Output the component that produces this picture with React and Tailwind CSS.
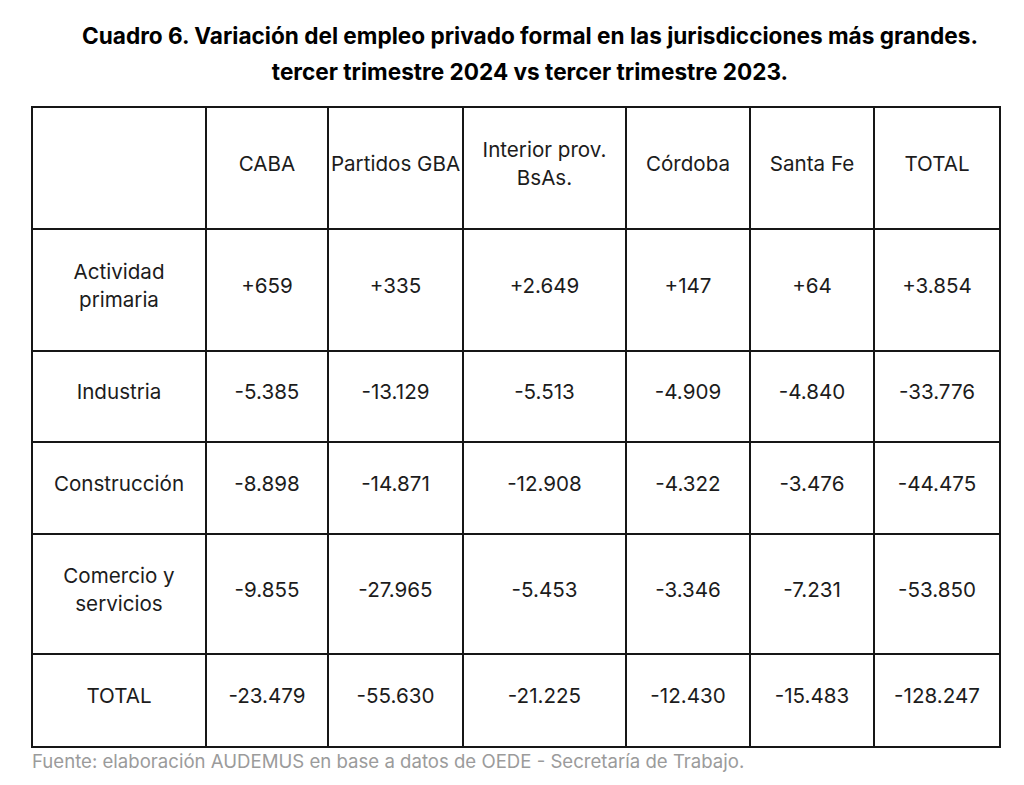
import React from "react";

const cols = ["", "CABA", "Partidos GBA", "Interior prov.\nBsAs.", "Córdoba", "Santa Fe", "TOTAL"];
const rows = [
  ["Actividad\nprimaria", "+659", "+335", "+2.649", "+147", "+64", "+3.854"],
  ["Industria", "-5.385", "-13.129", "-5.513", "-4.909", "-4.840", "-33.776"],
  ["Construcción", "-8.898", "-14.871", "-12.908", "-4.322", "-3.476", "-44.475"],
  ["Comercio y\nservicios", "-9.855", "-27.965", "-5.453", "-3.346", "-7.231", "-53.850"],
  ["TOTAL", "-23.479", "-55.630", "-21.225", "-12.430", "-15.483", "-128.247"],
];

function Cell({ text }) {
  return (
    <div className="bg-white flex items-center justify-center text-center pb-[9px] whitespace-pre-line leading-[28px] text-[20.6px] text-[#1c1c1c]">
      {text}
    </div>
  );
}

export default function App() {
  return (
    <div className="w-[1024px] h-[785px] bg-white overflow-hidden" style={{ fontFamily: "Inter, 'Noto Sans', sans-serif" }}>
      <div className="pt-[18px] pl-[36px] text-center font-bold text-[22.6px] leading-[36px] text-black">
        <div>Cuadro 6. Variación del empleo privado formal en las jurisdicciones más grandes.</div>
        <div>tercer trimestre 2024 vs tercer trimestre 2023.</div>
      </div>
      <div className="ml-[31px] mt-[16px] w-[970px] bg-[#161616] p-[2px] grid gap-[2px] grid-cols-[172px_120px_133px_161px_122px_122px_124px] grid-rows-[120px_120px_89px_90px_118px_91px]">
        {cols.map((c, i) => (
          <Cell key={"h" + i} text={c} />
        ))}
        {rows.map((r, ri) =>
          r.map((c, ci) => <Cell key={ri + "-" + ci} text={c} />)
        )}
      </div>
      <div className="ml-[32px] mt-[2px] text-[18.6px] leading-[22px] text-[#9b9b9b]">
        Fuente: elaboración AUDEMUS en base a datos de OEDE - Secretaría de Trabajo.
      </div>
    </div>
  );
}
